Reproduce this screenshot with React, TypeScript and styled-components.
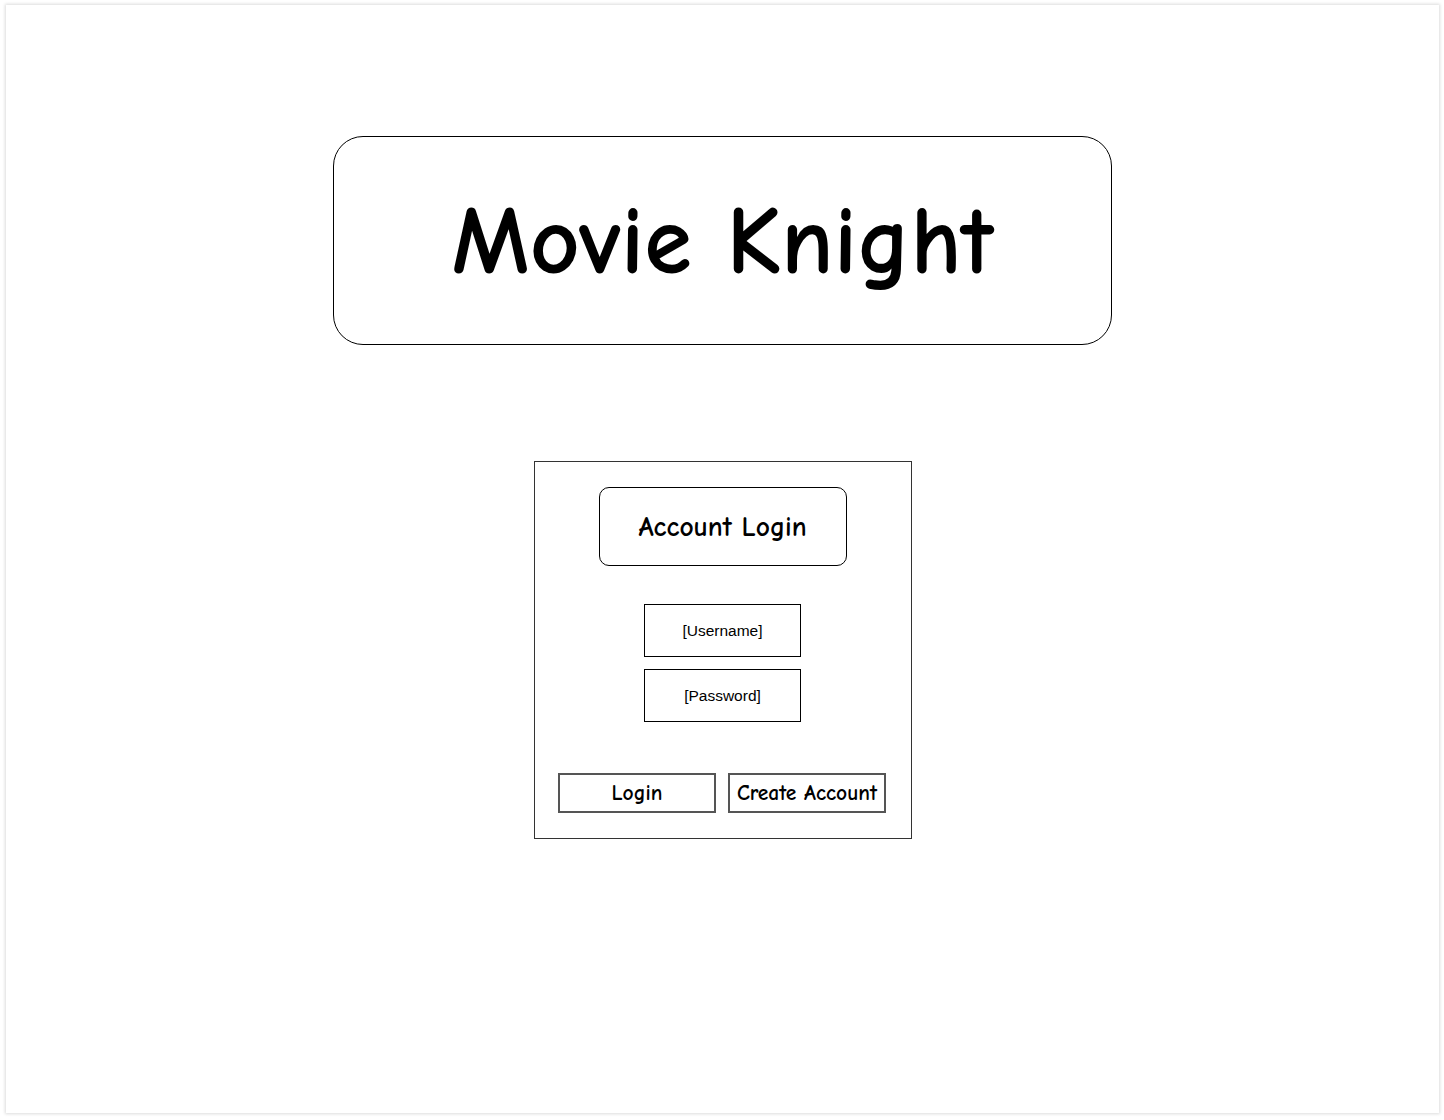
import React from "react";
import styled, { createGlobalStyle } from "styled-components";

const GlobalStyle = createGlobalStyle`
  html, body {
    margin: 0;
    padding: 0;
    background: #ffffff;
  }
  * { box-sizing: border-box; }
`;

const hand = `"Comic Sans MS", "Comic Neue", "DejaVu Sans", sans-serif`;

const Frame = styled.div`
  width: 1444px;
  height: 1120px;
  padding: 5px 5px 7px 6px;
`;

const Page = styled.div`
  width: 100%;
  height: 100%;
  background: #ffffff;
  box-shadow: 0 0 3px 1px rgba(0, 0, 0, 0.14);
  display: flex;
  flex-direction: column;
  align-items: center;
  padding-top: 131px;
`;

const TitleBox = styled.div`
  width: 779px;
  height: 209px;
  border: 1px solid #000;
  border-radius: 30px;
  display: flex;
  align-items: center;
  justify-content: center;
`;

const Title = styled.h1`
  margin: 0;
  font-family: ${hand};
  font-weight: 700;
  font-size: 97px;
  color: #000;
  letter-spacing: 0;
  transform: translateY(1px);
`;

const Panel = styled.div`
  margin-top: 116px;
  width: 378px;
  height: 378px;
  border: 1px solid #333;
  display: flex;
  flex-direction: column;
  align-items: center;
  padding-top: 25px;
`;

const Heading = styled.div`
  width: 248px;
  height: 79px;
  border: 1px solid #000;
  border-radius: 10px;
  display: flex;
  align-items: center;
  justify-content: center;
  font-family: ${hand};
  font-weight: 700;
  font-size: 27.5px;
  color: #000;
`;

const Field = styled.div<{ $gap: number }>`
  margin-top: ${(p) => p.$gap}px;
  width: 157px;
  height: 53px;
  border: 1px solid #000;
  display: flex;
  align-items: center;
  justify-content: center;
  font-family: "Liberation Sans", Arial, sans-serif;
  font-size: 15.5px;
  color: #000;
`;

const ButtonRow = styled.div`
  margin-top: 51px;
  display: flex;
  gap: 12px;
  padding-right: 1px;
`;

const Button = styled.div`
  width: 158px;
  height: 40px;
  border: 2px solid #555;
  display: flex;
  align-items: center;
  justify-content: center;
  font-family: ${hand};
  font-weight: 700;
  font-size: 21.5px;
  color: #000;
  white-space: nowrap;
`;

export default function App() {
  return (
    <>
      <GlobalStyle />
      <Frame>
        <Page>
          <TitleBox>
            <Title>Movie Knight</Title>
          </TitleBox>
          <Panel>
            <Heading>Account Login</Heading>
            <Field $gap={38}>[Username]</Field>
            <Field $gap={12}>[Password]</Field>
            <ButtonRow>
              <Button>Login</Button>
              <Button>Create Account</Button>
            </ButtonRow>
          </Panel>
        </Page>
      </Frame>
    </>
  );
}
